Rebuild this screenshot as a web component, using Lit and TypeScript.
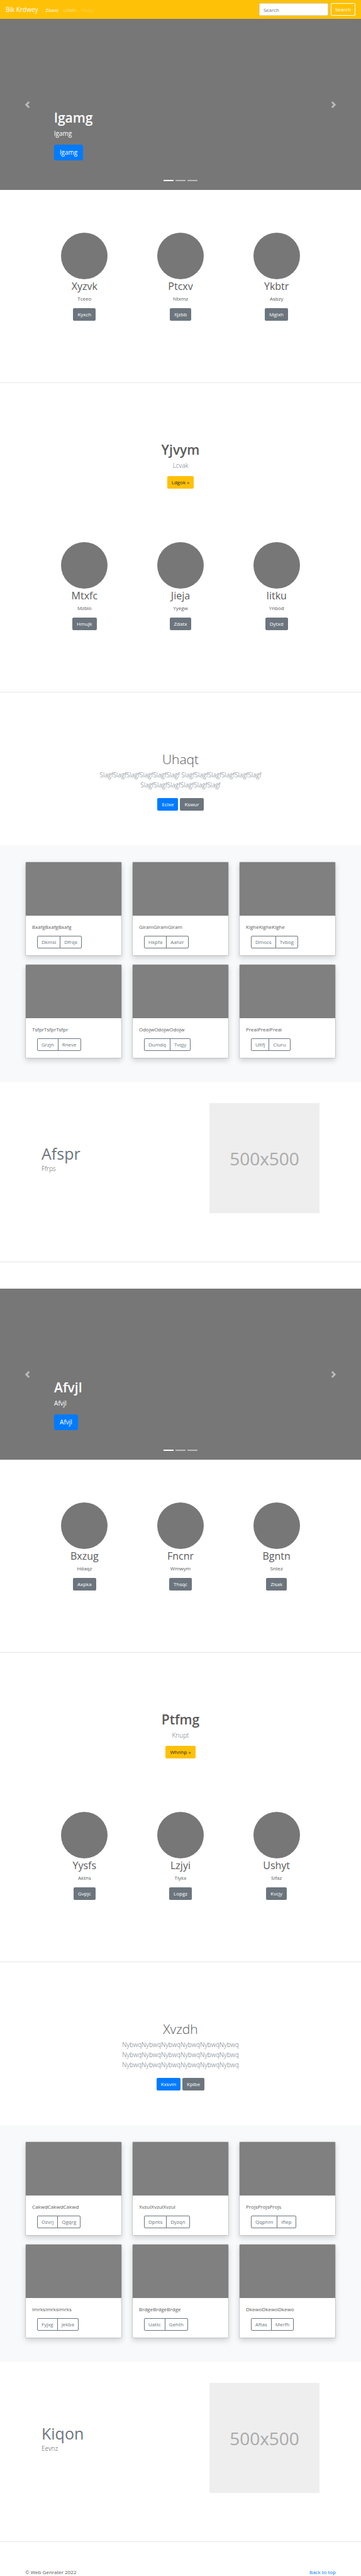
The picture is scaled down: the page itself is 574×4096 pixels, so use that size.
import { LitElement, html, css, svg } from "lit";
import { customElement, property } from "lit/decorators.js";

const base = css`
  * { box-sizing: border-box; }
  h1, h2, p { margin: 0; font-weight: inherit; }
  a { text-decoration: none; }
  button { font: inherit; cursor: pointer; }
  .btn {
    display: inline-block; height: 20px; padding: 0 6px; border: 1px solid transparent; border-radius: 2px;
    font-size: 8px; line-height: 18px; color: #fff; white-space: nowrap;
  }
  .primary { background: #007bff; }
  .secondary { background: #6c757d; }
  .warning { background: #ffc107; color: #212529; }
  .title { font-size: 21px; line-height: 26px; }
  .lead { font-size: 10px; line-height: 16px; font-weight: 300; color: #6c757d; }
`;

type Person = [name: string, text: string, action: string];
type Card = [text: string, first: string, second: string];

@customElement("site-nav")
class SiteNav extends LitElement {
  static styles = [base, css`
    :host { display: block; }
    .bar { display: flex; align-items: center; height: 30px; padding: 0 9px; background: #ffc107; color: #fff; }
    .brand { font-size: 10px; color: #fff; margin-right: 12px; }
    .links { display: flex; gap: 8px; flex: 1; }
    .link { font-size: 8px; color: rgba(255, 255, 255, 0.5); }
    .active { color: #fff; }
    .disabled { color: rgba(255, 255, 255, 0.25); }
    .search { display: flex; gap: 4px; }
    .field {
      width: 110px; height: 20px; padding: 0 6px; border: 1px solid #ced4da; border-radius: 2px;
      font: inherit; font-size: 8px; background: #fff; color: #495057;
    }
    .field::placeholder { color: #6c757d; opacity: 1; }
    .outline { background: transparent; border-color: #fff; }
  `];
  render() {
    return html`<nav class="bar">
      <a class="brand" href="#">Bik Krdwey</a>
      <div class="links">
        <a class="link active" href="#">Zluvo</a>
        <a class="link" href="#">Uitdh</a>
        <a class="link disabled" href="#" aria-disabled="true">Kbqiy</a>
      </div>
      <form class="search" @submit=${(e: Event) => e.preventDefault()}>
        <input class="field" type="search" placeholder="Search" aria-label="Search" />
        <button class="btn outline" type="submit">Search</button>
      </form>
    </nav>`;
  }
}

@customElement("hero-carousel")
class HeroCarousel extends LitElement {
  static styles = [base, css`
    :host { display: block; }
    .hero {
      position: relative; display: grid; grid-template-columns: 15% 1fr 15%; height: 272px;
      background: #777; color: #fff;
    }
    .control { display: grid; place-items: center; border: 0; padding: 0; background: none; opacity: 0.5; }
    .icon { width: 11px; height: 11px; fill: #fff; }
    .caption { align-self: end; padding-bottom: 47px; }
    .title { font-weight: 600; }
    .text { margin: 4px 0 10px; font-size: 10px; line-height: 16px; }
    .large { height: 25px; padding: 0 8px; border-radius: 3px; font-size: 10px; line-height: 23px; }
    .marks { position: absolute; inset: auto 0 14px; display: flex; justify-content: center; gap: 3px; }
    .mark { width: 16px; height: 2px; padding: 0; border: 0; background: #fff; opacity: 0.5; }
    .on { opacity: 1; }
  `];
  @property() label = "";
  render() {
    const arrow = (d: string) => html`<svg class="icon" viewBox="0 0 8 8" aria-hidden="true">${svg`<path d=${d} />`}</svg>`;
    return html`<section class="hero">
      <button class="control" aria-label="Previous">${arrow("M5.25 0l-4 4 4 4 1.5-1.5-2.5-2.5 2.5-2.5-1.5-1.5z")}</button>
      <div class="caption">
        <h1 class="title">${this.label}</h1>
        <p class="text">${this.label}</p>
        <a class="btn primary large" href="#">${this.label}</a>
      </div>
      <button class="control" aria-label="Next">${arrow("M2.75 0l-1.5 1.5 2.5 2.5-2.5 2.5 1.5 1.5 4-4-4-4z")}</button>
      <div class="marks">
        <button class="mark on" aria-label="Slide 1"></button>
        <button class="mark" aria-label="Slide 2"></button>
        <button class="mark" aria-label="Slide 3"></button>
      </div>
    </section>`;
  }
}

@customElement("people-row")
class PeopleRow extends LitElement {
  static styles = [base, css`
    :host { display: block; }
    .row { display: grid; grid-template-columns: repeat(3, 1fr); padding: 0 58px 98px; text-align: center; }
    .person { display: flex; flex-direction: column; align-items: center; }
    .avatar { width: 74px; height: 74px; border-radius: 50%; background: #777; }
    .name { font-size: 16px; line-height: 22px; }
    .text { margin: 3px 0 9px; font-size: 8px; line-height: 12px; }
  `];
  @property({ attribute: false }) people: Person[] = [];
  render() {
    return html`<div class="row">${this.people.map(([name, text, action]) => html`
      <div class="person">
        <div class="avatar"></div>
        <h2 class="name">${name}</h2>
        <p class="text">${text}</p>
        <a class="btn secondary" href="#">${action}</a>
      </div>`)}</div>`;
  }
}

@customElement("card-album")
class CardAlbum extends LitElement {
  static styles = [base, css`
    :host { display: block; }
    .album {
      display: grid; grid-template-columns: repeat(3, 1fr); gap: 13px 16px;
      padding: 26px 40px 38px; background: #f8f9fa;
    }
    .card {
      overflow: hidden; border: 1px solid rgba(0, 0, 0, 0.125); border-radius: 2px; background: #fff;
      background-clip: padding-box; box-shadow: 0 4px 8px rgba(0, 0, 0, 0.15);
    }
    .thumb { height: 85px; background: #808080; }
    .body { padding: 12px 10px 11px; }
    .text { margin-bottom: 8px; font-size: 8px; line-height: 12px; }
    .group { display: flex; padding-left: 8px; }
    .outline { background: transparent; border-color: #6c757d; color: #6c757d; }
    .outline:first-child { border-radius: 2px 0 0 2px; }
    .outline:last-child { margin-left: -1px; border-radius: 0 2px 2px 0; }
  `];
  @property({ attribute: false }) cards: Card[] = [];
  render() {
    return html`<section class="album">${this.cards.map(([text, first, second]) => html`
      <article class="card">
        <div class="thumb"></div>
        <div class="body">
          <p class="text">${text}</p>
          <div class="group">
            <button class="btn outline" type="button">${first}</button>
            <button class="btn outline" type="button">${second}</button>
          </div>
        </div>
      </article>`)}</section>`;
  }
}

@customElement("feature-row")
class FeatureRow extends LitElement {
  static styles = [base, css`
    :host { display: block; }
    .feature {
      display: flex; align-items: center; justify-content: space-between; padding: 33px 66px 77px;
      border-bottom: 1px solid #e5e5e5;
    }
    .heading { font-size: 25px; line-height: 32px; color: #6c757d; }
    .lead { color: #5a5a5a; }
    .picture {
      display: grid; place-items: center; width: 175px; height: 175px; background: #eee;
      font-size: 28px; color: #aaa;
    }
  `];
  @property() heading = "";
  @property() text = "";
  render() {
    return html`<section class="feature">
      <div>
        <h2 class="heading">${this.heading}</h2>
        <p class="lead">${this.text}</p>
      </div>
      <div class="picture">500x500</div>
    </section>`;
  }
}

const cardsA: Card[] = [
  ["BxafgBxafgBxafg", "Dkmsl", "Dfrqk"], ["GlramGlramGlram", "Hkpfa", "Aahzr"], ["KlgheKlgheKlghe", "Dmocs", "Tvbog"],
  ["TsfprTsfprTsfpr", "Grzjn", "Rneve"], ["OdojwOdojwOdojw", "Dumdq", "Tvqjy"], ["PreaiPreaiPreai", "Ultfj", "Ciuru"],
];
const cardsB: Card[] = [
  ["CakwdCakwdCakwd", "Ozvrj", "Qgqrg"], ["XvzulXvzulXvzul", "Dpnts", "Dyzqn"], ["ProjsProjsProjs", "Qqphm", "Iflep"],
  ["ImrksImrksImrks", "Fyjxg", "Jekba"], ["BrdgeBrdgeBrdge", "Uattc", "Gehth"], ["DkewoDkewoDkewo", "Aftas", "Merfh"],
];

@customElement("app-root")
class AppRoot extends LitElement {
  static styles = [base, css`
    :host { display: block; background: #fff; color: #5a5a5a; font-family: "Open Sans", "Noto Sans", sans-serif; font-size: 8px; }
    .first { padding-top: 68px; }
    .banner { padding: 93px 0 85px; border-top: 1px solid #e5e5e5; text-align: center; }
    .banner .title { font-weight: 600; }
    .banner .lead { margin: 4px 0 9px; }
    .intro { padding: 93px 16px 55px; border-top: 1px solid #e5e5e5; text-align: center; }
    .intro .title { font-weight: 300; }
    .intro .lead { max-width: 340px; margin: 4px auto 13px; }
    .actions { display: flex; justify-content: center; gap: 3px; }
    .banner .btn { display: block; width: max-content; margin: 0 auto; }
    .space { height: 42px; }
    .footer { display: flex; justify-content: space-between; padding: 42px 40px 0; line-height: 12px; }
    .top { color: #007bff; }
  `];

  banner(title: string, text: string, action: string) {
    return html`<section class="banner">
      <h2 class="title">${title}</h2>
      <p class="lead">${text}</p>
      <a class="btn warning" href="#">${action} »</a>
    </section>`;
  }

  intro(title: string, text: string, first: string, second: string) {
    return html`<section class="intro">
      <h2 class="title">${title}</h2>
      <p class="lead">${text}</p>
      <div class="actions">
        <a class="btn primary" href="#">${first}</a>
        <a class="btn secondary" href="#">${second}</a>
      </div>
    </section>`;
  }

  render() {
    return html`
      <site-nav></site-nav>
      <main>
        <hero-carousel label="lgamg"></hero-carousel>
        <people-row class="first" .people=${[["Xyzvk", "Tceeo", "Kyxch"], ["Ptcxv", "Ntxmz", "Xjzbb"], ["Ykbtr", "Asbzy", "Mgixh"]]}></people-row>
        ${this.banner("Yjvym", "Lcvak", "Ldgok")}
        <people-row .people=${[["Mtxfc", "Mzblo", "Hmujk"], ["Jieja", "Yyegw", "Zdatx"], ["Iitku", "Ynbod", "Dytxd"]]}></people-row>
        ${this.intro("Uhaqt", "SlagfSlagfSlagfSlagfSlagfSlagf SlagfSlagfSlagfSlagfSlagfSlagf SlagfSlagfSlagfSlagfSlagfSlagf", "Eclxe", "Kswur")}
        <card-album .cards=${cardsA}></card-album>
        <feature-row heading="Afspr" text="Ffrps"></feature-row>
        <div class="space"></div>
        <hero-carousel label="Afvjl"></hero-carousel>
        <people-row class="first" .people=${[["Bxzug", "Hdaqz", "Axpka"], ["Fncnr", "Wmwym", "Thsqc"], ["Bgntn", "Sntez", "Zisak"]]}></people-row>
        ${this.banner("Ptfmg", "Knupt", "Whnhp")}
        <people-row .people=${[["Yysfs", "Aktns", "Gvpjc"], ["Lzjyi", "Tlykx", "Lopgz"], ["Ushyt", "Sifaz", "Kvcjy"]]}></people-row>
        ${this.intro("Xvzdh", "NybwqNybwqNybwqNybwqNybwqNybwq NybwqNybwqNybwqNybwqNybwqNybwq NybwqNybwqNybwqNybwqNybwqNybwq", "Kxsvm", "Kplbe")}
        <card-album .cards=${cardsB}></card-album>
        <feature-row heading="Kiqon" text="Eevnz"></feature-row>
      </main>
      <footer class="footer"><span>© Web Genrater 2022</span><a class="top" href="#">Back to top</a></footer>
    `;
  }
}
